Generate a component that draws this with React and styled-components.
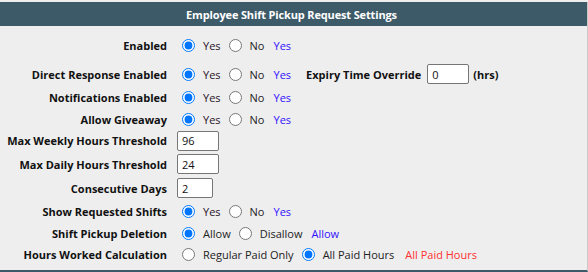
import React from "react";
import styled, { createGlobalStyle } from "styled-components";

const Global = createGlobalStyle`
  html, body { margin: 0; padding: 0; background: #eeeeee; }
  body { font-family: "Open Sans", "Noto Sans", sans-serif; font-size: 11px; color: #222; }
`;

const Panel = styled.div`
  margin-top: 2px;
  width: 588px;
  box-sizing: border-box;
  border-right: 1px solid #c9c9c9;
  border-bottom: 2px solid #3d5a68;
  background: #eeeeee;
  padding-bottom: 5px;
`;

const Header = styled.div`
  height: 24px;
  background: #3d5a68;
  color: #ffffff;
  font-weight: 700;
  display: flex;
  align-items: center;
  justify-content: center;
  padding-right: 4px;
  letter-spacing: -0.15px;
`;

const Row = styled.div`
  display: flex;
  align-items: center;
  height: ${(p) => p.$h}px;
`;

const Label = styled.div`
  width: 167px;
  text-align: right;
  font-weight: 700;
  color: #111;
  white-space: nowrap;
  flex: none;
`;

const Controls = styled.div`
  display: flex;
  align-items: center;
  margin-left: 10px;
  white-space: nowrap;
`;

const Radio = styled.input.attrs({ type: "radio" })`
  width: 13px;
  height: 13px;
  margin: 0 0 0 5px;
  accent-color: #0075ff;
`;

const Opt = styled.span`
  margin-left: 8px;
  margin-right: 3px;
  color: ${(p) => p.$c || "#222"};
`;

const Value = styled.span`
  margin-left: ${(p) => (p.$red ? 8 : 6)}px;
  color: ${(p) => (p.$red ? "#ff3030" : "#3311ff")};
`;

const TextBox = styled.input.attrs({ type: "text" })`
  box-sizing: border-box;
  width: ${(p) => p.$w}px;
  height: 20px;
  border: 1px solid #767676;
  border-radius: 2px;
  background: #fff;
  font-family: inherit;
  font-size: 11px;
  padding: 0 4px;
  margin: 0;
  color: #111;
`;

const SideLabel = styled.span`
  font-weight: 700;
  margin-left: 15px;
  margin-right: 6px;
  color: #111;
`;

const Unit = styled.span`
  margin-left: 4px;
  font-weight: 700;
  color: #111;
`;

function YesNo({ name }) {
  return (
    <>
      <Radio name={name} defaultChecked />
      <Opt $c="#2a1228">Yes</Opt>
      <Radio name={name} />
      <Opt>No</Opt>
      <Value>Yes</Value>
    </>
  );
}

export default function App() {
  return (
    <>
      <Global />
      <Panel>
        <Header>Employee Shift Pickup Request Settings</Header>
        <Row $h={38}>
          <Label>Enabled</Label>
          <Controls>
            <YesNo name="en" />
          </Controls>
        </Row>
        <Row $h={20}>
          <Label>Direct Response Enabled</Label>
          <Controls>
            <YesNo name="dr" />
            <SideLabel>Expiry Time Override</SideLabel>
            <TextBox $w={42} defaultValue="0" />
            <Unit>(hrs)</Unit>
          </Controls>
        </Row>
        <Row $h={26}>
          <Label>Notifications Enabled</Label>
          <Controls>
            <YesNo name="ne" />
          </Controls>
        </Row>
        <Row $h={19}>
          <Label>Allow Giveaway</Label>
          <Controls>
            <YesNo name="ag" />
          </Controls>
        </Row>
        <Row $h={23}>
          <Label>Max Weekly Hours Threshold</Label>
          <Controls>
            <TextBox $w={42} defaultValue="96" />
          </Controls>
        </Row>
        <Row $h={24}>
          <Label>Max Daily Hours Threshold</Label>
          <Controls>
            <TextBox $w={42} defaultValue="24" />
          </Controls>
        </Row>
        <Row $h={24}>
          <Label>Consecutive Days</Label>
          <Controls>
            <TextBox $w={36} defaultValue="2" />
          </Controls>
        </Row>
        <Row $h={23}>
          <Label>Show Requested Shifts</Label>
          <Controls>
            <YesNo name="sr" />
          </Controls>
        </Row>
        <Row $h={21}>
          <Label>Shift Pickup Deletion</Label>
          <Controls>
            <Radio name="sd" defaultChecked />
            <Opt>Allow</Opt>
            <Radio name="sd" />
            <Opt>Disallow</Opt>
            <Value>Allow</Value>
          </Controls>
        </Row>
        <Row $h={21}>
          <Label>Hours Worked Calculation</Label>
          <Controls>
            <Radio name="hw" />
            <Opt>Regular Paid Only</Opt>
            <Radio name="hw" defaultChecked />
            <Opt>All Paid Hours</Opt>
            <Value $red>All Paid Hours</Value>
          </Controls>
        </Row>
      </Panel>
    </>
  );
}
